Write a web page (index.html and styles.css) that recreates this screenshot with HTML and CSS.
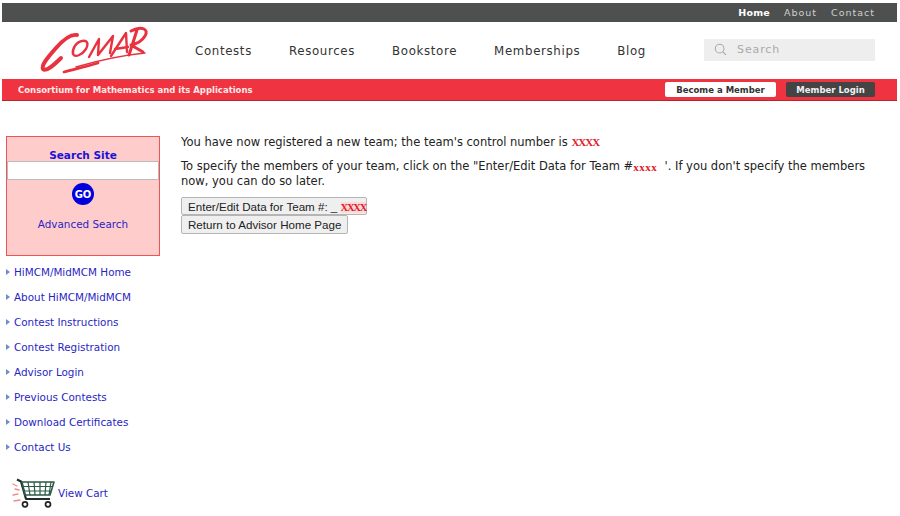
FILE: index.html
```html
<!DOCTYPE html>
<html lang="en">
<head>
<meta charset="utf-8">
<title>HiMCM Team Registered</title>
<link rel="stylesheet" href="styles.css">
</head>
<body>
<header class="site-header">
  <div class="topbar">
    <a class="top-link strong">Home</a>
    <a class="top-link">About</a>
    <a class="top-link">Contact</a>
  </div>
  <div class="mainbar">
    <svg class="logo" viewBox="0 0 125 56" aria-label="COMAP logo" role="img">
      <g fill="none" stroke="#e8323f" stroke-linecap="round" stroke-linejoin="round">
        <path d="M47 13C41 12 33 18 26 26C18 35 11 43 13 47C16 50 24 43 31 36" stroke-width="4"/>
        <path d="M52 19C46 20 42 27 43 32C45 36 52 33 56 27C59 21 57 18 52 19Z" stroke-width="2.400"/>
        <path d="M59 35L69 17L68 33L83 14L80 31" stroke-width="2.400"/>
        <path d="M81 34L96 11L97 30M85 27L98 25" stroke-width="2.400"/>
        <path d="M99 33L107 8M101 9C113 3 119 8 115 14C112 19 106 22 101 23L113 30" stroke-width="3"/>
        <path d="M46 45C70 38 95 33 115 31" stroke-width="1.500"/>
        <path d="M34 50C45 47 55 45 68 41" stroke-width="2.800"/>
      </g>
    </svg>
    <nav class="mainnav">
      <a>Contests</a>
      <a>Resources</a>
      <a>Bookstore</a>
      <a>Memberships</a>
      <a>Blog</a>
    </nav>
    <div class="searchbox">
      <svg class="searchicon" viewBox="0 0 12 12"><circle cx="5.200" cy="5.200" r="4" fill="none" stroke="#aaa" stroke-width="1"/><path d="M8.200 8.200L11 11" stroke="#aaa" stroke-width="1"/></svg>
      <span>Search</span>
    </div>
  </div>
  <div class="redbar">
    <span class="tagline">Consortium for Mathematics and its Applications</span>
    <div class="redbar-actions">
      <a class="pill pill-light">Become a Member</a>
      <a class="pill pill-dark">Member Login</a>
    </div>
  </div>
</header>
<div class="page">
  <aside class="sidebar">
    <div class="searchpanel">
      <div class="searchpanel-title">Search Site</div>
      <input class="searchpanel-input" type="text">
      <div class="gobtn">GO</div>
      <a class="adv">Advanced Search</a>
    </div>
    <ul class="sidenav">
      <li>HiMCM/MidMCM Home</li>
      <li>About HiMCM/MidMCM</li>
      <li>Contest Instructions</li>
      <li>Contest Registration</li>
      <li>Advisor Login</li>
      <li>Previous Contests</li>
      <li>Download Certificates</li>
      <li>Contact Us</li>
    </ul>
    <div class="cart">
      <svg class="carticon" viewBox="0 0 46 30">
        <g stroke="#ee8d86" stroke-width="1.300" stroke-linecap="round"><path d="M1 6L5 8"/><path d="M3 11L7 12"/><path d="M1 17L6 16"/><path d="M2 23L8 22"/></g>
        <g fill="none" stroke="#2c5a46" stroke-linejoin="round">
          <path d="M5 1.500L9 3.500L14 21H38" stroke="#1c2f28" stroke-width="2.200"/>
          <path d="M10 4H42L38 17H13Z" stroke-width="1.600"/>
          <path d="M16 4L18 17M22 4L23 17M28 4L28 17M34 4L33 17M39 4L37 17M11 8.500H41M12 13H40" stroke-width="1.200"/>
        </g>
        <circle cx="13" cy="26.300" r="2.500" fill="#fff" stroke="#222" stroke-width="1.700"/>
        <circle cx="36" cy="26.300" r="2.500" fill="#fff" stroke="#222" stroke-width="1.700"/>
      </svg>
      <a>View Cart</a>
    </div>
  </aside>
  <main class="content">
    <p class="line-first">You have now registered a new team; the team's control number is <span class="mask">XXXX</span></p>
    <p class="line-second">To specify the members of your team, click on the "Enter/Edit Data for Team #<span class="mask mask-small">xxxx</span> &nbsp;'. If you don't specify the members now, you can do so later.</p>
    <div class="btns">
      <button class="btn" type="button">Enter/Edit Data for Team #: _ <span class="mask mask-btn">XXXX</span></button>
      <button class="btn" type="button">Return to Advisor Home Page</button>
    </div>
  </main>
</div>
</body>
</html>
```
FILE: styles.css
```css
* { box-sizing: border-box; }
html, body { margin: 0; padding: 0; background: #fff; }
body { width: 900px; height: 516px; overflow: hidden; font-family: "DejaVu Sans", sans-serif; }
.site-header { padding: 3px 3px 0 2px; }
.topbar { height: 19px; background: #4e504f; display: flex; justify-content: flex-end; align-items: center; gap: 14px; padding-right: 22px; font-size: 9.500px; letter-spacing: 1px; color: #cfcfcf; }
.top-link.strong { color: #fff; font-weight: 700; letter-spacing: 0.200px; }
.mainbar { height: 57px; display: flex; align-items: center; padding-bottom: 2px; }
.logo { width: 125px; height: 56px; margin-left: 28px; flex: none; }
.mainnav { display: flex; gap: 37px; margin-left: 40px; padding-top: 2px; font-size: 11.800px; letter-spacing: 0.650px; color: #333; width: 509px; }
.searchbox { width: 171px; height: 22px; background: #eeeeee; display: flex; align-items: center; gap: 10px; padding-left: 10px; font-size: 11px; letter-spacing: 0.900px; color: #aaa; }
.searchicon { width: 13px; height: 13px; flex: none; }
.redbar { height: 22px; background: #ef3340; border-bottom: 1px solid #b5262f; display: flex; justify-content: space-between; align-items: center; padding: 0 22px 0 16px; }
.tagline { font-weight: 700; font-size: 8.500px; color: #fde9e9; }
.redbar-actions { display: flex; gap: 10px; }
.pill { height: 15px; display: flex; align-items: center; justify-content: center; border-radius: 2px; font-weight: 700; font-size: 8.500px; }
.pill-light { width: 111px; background: #fff; color: #333; }
.pill-dark { width: 89px; background: #444; color: #f2f2f2; }
.page { display: flex; padding: 35px 0 0 6px; }
.sidebar { width: 154px; flex: none; }
.searchpanel { height: 120px; background: #ffcccc; border: 1px solid #ee5555; display: flex; flex-direction: column; align-items: center; padding-top: 13px; }
.searchpanel-title { font-size: 10.500px; font-weight: 700; color: #1a12d6; line-height: 11px; }
.searchpanel-input { display: block; width: 152px; height: 19px; border: 1px solid #bbb; background: #fff; padding: 0; margin: 0; }
.gobtn { width: 22px; height: 22px; border-radius: 50%; background: #0000dd; color: #fff; font-size: 10px; font-weight: 700; display: flex; align-items: center; justify-content: center; margin-top: 3px; }
.adv { font-size: 10.400px; color: #2a1fc4; margin-top: 13px; }
.sidenav { list-style: none; margin: 9px 0 0; padding: 0; font-size: 10.400px; color: #2a1fc4; }
.sidenav li { height: 25px; line-height: 15px; padding-left: 8px; position: relative; }
.sidenav li::before { content: ""; position: absolute; left: 0; top: 4px; border-left: 4px solid #6d8fc6; border-top: 3px solid transparent; border-bottom: 3px solid transparent; }
.cart { display: flex; align-items: center; margin: 13px 0 0 6px; font-size: 10.400px; color: #2a1fc4; }
.carticon { width: 46px; height: 30px; flex: none; }
.content { flex: 1; padding: 0 26px 0 21px; font-size: 11.500px; color: #222; line-height: 14px; }
.content p { margin: 0; }
.line-first { line-height: 12px; }
.line-second { margin-top: 11px !important; }
.mask { color: #e01b2a; font-family: "Liberation Serif", serif; font-weight: 700; font-size: 11px; letter-spacing: -1px; }
.mask-small { letter-spacing: 0.500px; vertical-align: -1px; }
.mask-btn { font-size: 10.500px; letter-spacing: -1.200px; background: #fbdada; }
.btns { display: flex; flex-direction: column; align-items: flex-start; margin-top: 9px; }
.btn { height: 18px; padding: 0 0 0 6px; font-family: "Liberation Sans", sans-serif; font-size: 11.600px; color: #222; background: #efefef; border: 1px solid #b5b5b5; border-radius: 2px; }
.btn:last-child { height: 19px; padding: 0 6px; }
```
